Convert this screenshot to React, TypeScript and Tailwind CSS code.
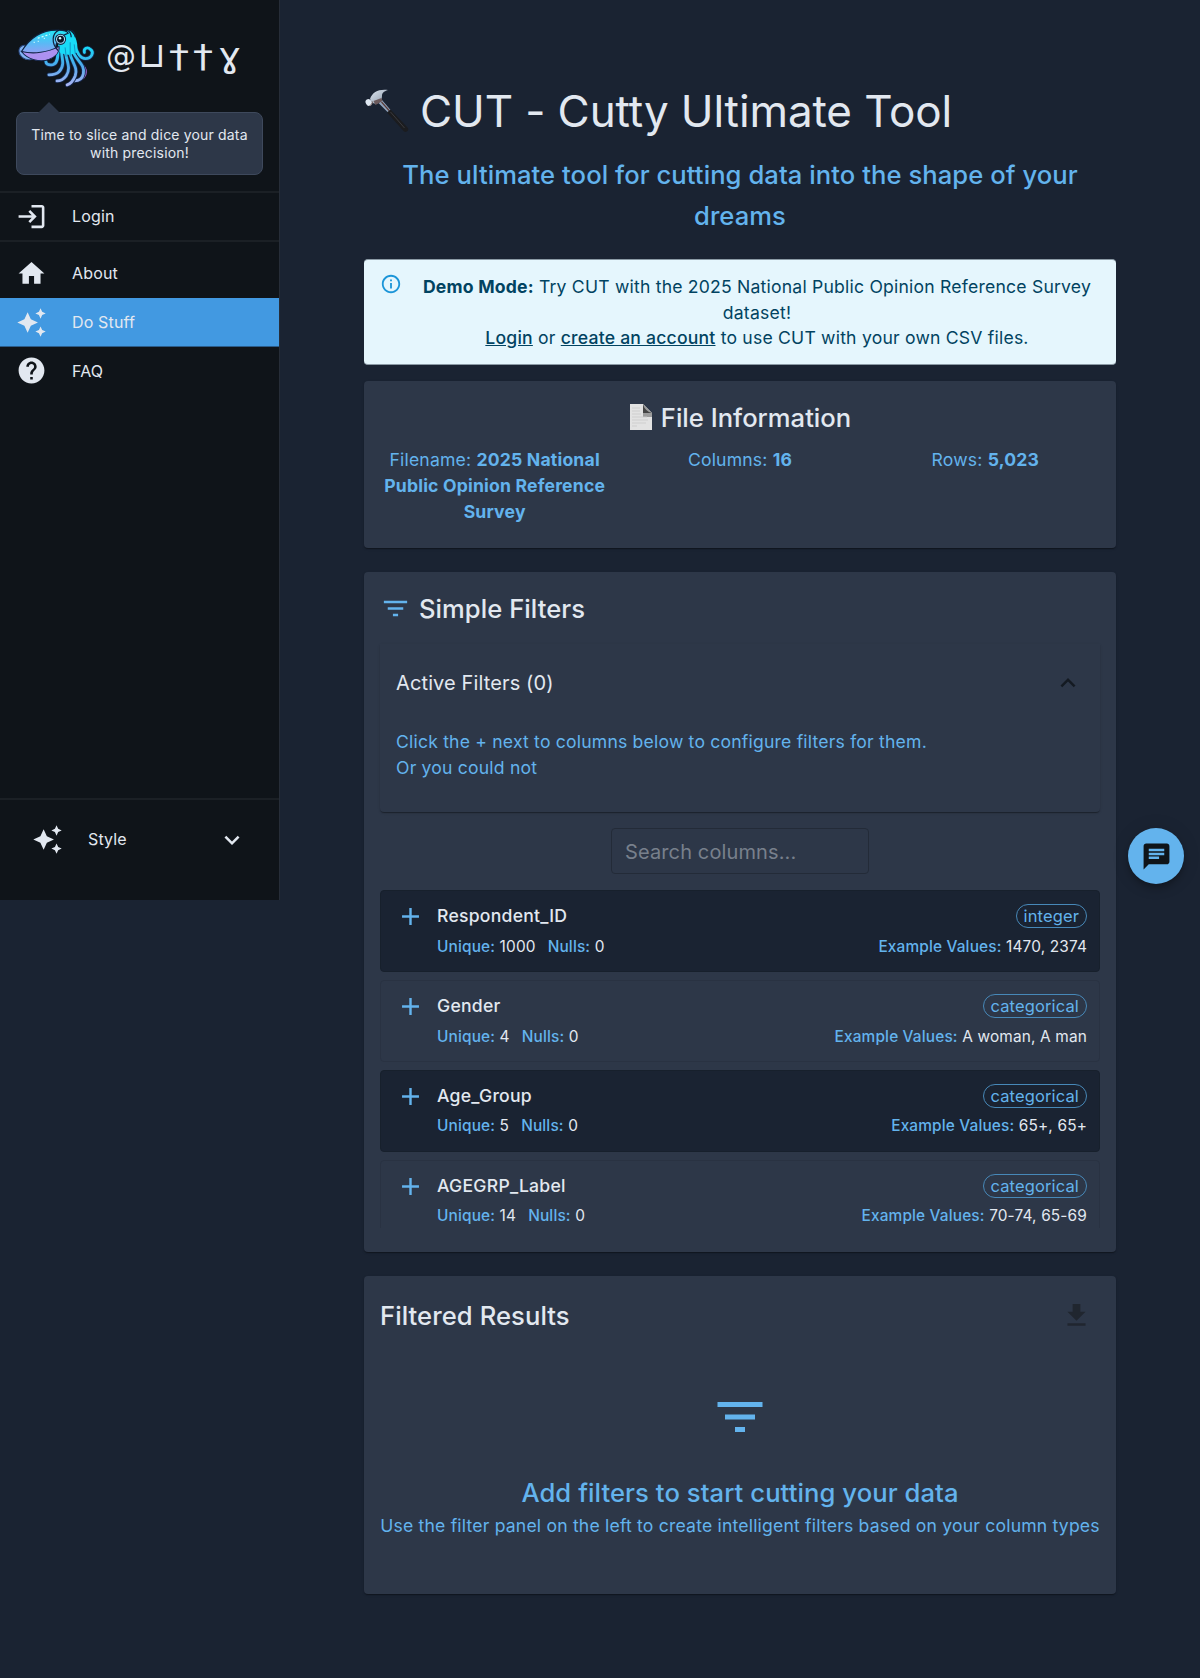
import React from "react";

const P = {
  login: "M11 7 9.6 8.4l2.6 2.6H2v2h10.2l-2.6 2.6L11 17l5-5zm9 12h-8v2h8c1.1 0 2-.9 2-2V5c0-1.100-.9-2-2-2h-8v2h8z",
  home: "M10 20v-6h4v6h5v-8h3L12 3 2 12h3v8z",
  sparkle: "m19 9 1.250-2.750L23 5l-2.750-1.250L19 1l-1.250 2.750L15 5l2.750 1.250zm-7.500.5L9 4 6.500 9.500 1 12l5.500 2.500L9 20l2.500-5.500L17 12zM19 15l-1.250 2.750L15 19l2.750 1.250L19 23l1.250-2.750L23 19l-2.750-1.250z",
  help: "M12 2C6.480 2 2 6.480 2 12s4.480 10 10 10 10-4.480 10-10S17.520 2 12 2m1 17h-2v-2h2zm2.070-7.750-.9.920C13.450 12.900 13 13.500 13 15h-2v-.5c0-1.100.450-2.100 1.170-2.830l1.240-1.260c.370-.360.590-.860.590-1.410 0-1.100-.9-2-2-2s-2 .9-2 2H8c0-2.210 1.790-4 4-4s4 1.790 4 4c0 .880-.360 1.680-.930 2.250",
  down: "M16.590 8.590 12 13.170 7.410 8.590 6 10l6 6 6-6z",
  up: "m12 8-6 6 1.410 1.410L12 10.830l4.590 4.580L18 14z",
  filter: "M10 18h4v-2h-4zM3 6v2h18V6zm3 7h12v-2H6z",
  plus: "M19 13h-6v6h-2v-6H5v-2h6V5h2v6h6z",
  chat: "M20 2H4c-1.100 0-1.990.9-1.990 2L2 22l4-4h14c1.100 0 2-.9 2-2V4c0-1.100-.9-2-2-2M6 9h12v2H6zm8 5H6v-2h8zm4-6H6V6h12z",
  download: "M5 20h14v-2H5zM19 9h-4V3H9v6H5l7 7z",
  info: "M11 7h2v2h-2zm0 4h2v6h-2zm1-9C6.480 2 2 6.480 2 12s4.480 10 10 10 10-4.480 10-10S17.520 2 12 2m0 18c-4.410 0-8-3.590-8-8s3.590-8 8-8 8 3.590 8 8-3.590 8-8 8",
};

function Icon({ d, className }: { d: string; className: string }) {
  return (
    <svg viewBox="0 0 24 24" fill="currentColor" className={"shrink-0 " + className}>
      <path d={d} />
    </svg>
  );
}

function Cuttlefish() {
  const arms = [
    "M57 29C60 36 62 40 67 40C73 40 76 34 72 31C69 28 65 30 66 34",
    "M54 31C57 42 67 45 65 55C64 60 60 62 56 62",
    "M51 32C53 44 60 48 57 57C55 62 53 65 49 66",
    "M47 33C49 44 53 50 48 57C45 61 43 62 39 62",
    "M43 32C45 43 46 48 41 53C38 56 34 56 31 56",
    "M40 31C40 40 39 45 35 46C30 47 28 45 28 43",
  ];
  return (
    <svg viewBox="0 0 78 70" className="h-[71px] w-[80px] shrink-0">
      <defs>
        <linearGradient id="mantle" x1="0" y1="0" x2="0" y2="1">
          <stop offset="0" stopColor="#22e4f4" />
          <stop offset="0.55" stopColor="#5bb9f5" />
          <stop offset="1" stopColor="#9a9cf4" />
        </linearGradient>
        <linearGradient id="arm" x1="0" y1="28" x2="0" y2="66" gradientUnits="userSpaceOnUse">
          <stop offset="0" stopColor="#14dcf8" />
          <stop offset="0.5" stopColor="#4da8ea" />
          <stop offset="1" stopColor="#a9b5f5" />
        </linearGradient>
      </defs>
      <path d="M9 27C1 26-1 34 5 39C10 43 15 41 18 40Z" fill="#83b4f4" stroke="#2b4a80" />
      <g fill="none" strokeLinecap="round">
        <path d="M62 45C69 49 70 58 60 62" stroke="#9a62cf" strokeWidth="2.200" />
        {arms.map((d) => (
          <g key={d}>
            <path d={d} stroke="#14284c" strokeWidth="4.400" />
            <path d={d} stroke="url(#arm)" strokeWidth="2.800" />
          </g>
        ))}
      </g>
      <path d="M40 30C40 22 42 15 50 12C56 14 60 22 59 33C55 37 47 37 42 34Z" fill="#18dbf7" />
      <path d="M52 24v14M47 29l1 9M56 26l1 9" stroke="#1283b8" strokeWidth=".8" fill="none" />
      <path d="M4 33C12 20 24 11 41 12C46 12 49 13 50 15C43 17 37 24 38 30C28 37 13 38 4 33Z" fill="url(#mantle)" stroke="#10233f" strokeWidth="1.200" />
      <path d="M4 33C16 36 30 34 41 28C42 33 38 38 31 41C22 44 10 41 4 33Z" fill="#ad91f0" stroke="#14284c" strokeWidth="1" />
      <path d="M41 12C34 15 33 25 40 32M49 12C53 14 53 17 53 19M52 12C56 13 57 16 57 19" fill="none" stroke="#10233f" strokeWidth="1.200" />
      <path d="M20 20l12-4M16 24h1M20 23h1M26 20h1" fill="none" stroke="#d8ffff" strokeWidth="1.200" strokeDasharray="2 2" />
      <circle cx="42.500" cy="21" r="5" fill="#a9dcf5" stroke="#10233f" />
      <circle cx="42.500" cy="21" r="3.400" fill="#0c1626" />
      <circle cx="42" cy="20" r="1.200" fill="#dff" />
    </svg>
  );
}

function Hammer() {
  return (
    <svg viewBox="0 0 44 44" className="-mt-[2px] h-[44px] w-[45px] shrink-0">
      <defs>
        <linearGradient id="steel" x1="0" y1="0" x2="1" y2="1">
          <stop offset="0" stopColor="#dde6f0" />
          <stop offset="0.6" stopColor="#a9b4c2" />
          <stop offset="1" stopColor="#5f6873" />
        </linearGradient>
      </defs>
      <path d="M14 14l3.500-3 9 10.500-2.500 2.500z" fill="#8fa3bd" />
      <path d="M17 13l8 9" stroke="#5b3d38" strokeWidth="1.200" />
      <path d="M22.500 23.500L26 20.500L43 38.500C45 41 42 44 39.500 42.500Z" fill="#1b1c1f" />
      <path d="M26 23L40 39" stroke="#3a3a3d" strokeWidth="1" />
      <path d="M5.500 10C8 3 14 0 23.500 1C19 2.500 17.500 4 17.500 7L17 12L12 15L8 14Z" fill="url(#steel)" />
      <path d="M9 12l8-3 1 3-7 4z" fill="#6b5a5c" />
      <ellipse cx="4.300" cy="13.500" rx="3" ry="3.600" transform="rotate(-35 4.300 13.500)" fill="#dfe8f2" />
      <path d="M5 16.500c2-.5 3-2 2.800-4" stroke="#6a5550" fill="none" />
    </svg>
  );
}

function PageIcon() {
  return (
    <svg viewBox="0 0 22 26" className="-mt-[2px] h-[26px] w-[22px] shrink-0">
      <path d="M0 0h13l9 9v17H0z" fill="#e2e2e2" />
      <path d="M13 0l9 9v4H13z" fill="#9c9c9c" />
      <path d="M13 0v9h9c-4-1-8-4-9-9z" fill="#444" />
      <path d="M2 4h8M2 7h8M2 10h9M2 13h15M2 16h16M2 19h14M2 22h5" stroke="#cacaca" strokeWidth=".8" />
    </svg>
  );
}

const card = "w-full rounded bg-[#2d3748] shadow-[0_2px_1px_-1px_rgba(0,0,0,.2),0_1px_1px_rgba(0,0,0,.14),0_1px_3px_rgba(0,0,0,.12)]";

const nav = [
  { label: "About", icon: P.home, row: "h-[48px]" },
  { label: "Do Stuff", icon: P.sparkle, row: "h-[49px] border-b border-[#2a5c8a] bg-[#4299e1]" },
  { label: "FAQ", icon: P.help, row: "h-[47px]" },
];

const columns = [
  { name: "Respondent_ID", unique: "1000", type: "integer", ex: "1470, 2374" },
  { name: "Gender", unique: "4", type: "categorical", ex: "A woman, A man" },
  { name: "Age_Group", unique: "5", type: "categorical", ex: "65+, 65+" },
  { name: "AGEGRP_Label", unique: "14", type: "categorical", ex: "70-74, 65-69" },
];

function Sidebar() {
  return (
    <aside className="flex h-[900px] w-[280px] shrink-0 flex-col border-r border-[#262d38] bg-[#0f1419] text-[#e2e8f0]">
      <div className="flex h-[112px] items-start pl-[17px] pt-[18px]">
        <Cuttlefish />
        <div className="ml-[9px] flex items-baseline pt-[15px] font-['DejaVu_Sans'] leading-[44px]">
          <span className="w-[32px] text-[30px]">@</span>
          <span className="w-[31px] text-[35px]">⊔</span>
          <span className="w-[24px] origin-left scale-x-125 text-[32px]">†</span>
          <span className="w-[25px] origin-left scale-x-125 text-[32px]">†</span>
          <span className="origin-left scale-x-115 text-[34px]">ɣ</span>
        </div>
      </div>
      <div className="relative mx-4 flex h-[63px] items-center justify-center rounded-lg border border-[#3e495c] bg-[#2d3748] text-center text-[14px] leading-[18px] tracking-[0.012em]">
        <span className="absolute -top-[11px] left-[21px] border-x-[11px] border-b-[11px] border-x-transparent border-b-[#2d3748]" />
        <p className="w-[230px]">Time to slice and dice your data with precision!</p>
      </div>
      <div className="mt-4 flex h-[51px] items-center border-y-2 border-[#1b2025] pb-px pl-4 text-[16px] tracking-[0.00938em]">
        <Icon d={P.login} className="size-[31px]" />
        <span className="ml-[25px]">Login</span>
      </div>
      <nav className="mt-[7px] text-[16px] tracking-[0.00938em]">
        {nav.map((n, i) => (
          <div key={n.label} className={n.row + (i === 0 ? " mb-px" : "") + " flex items-center pl-4"}>
            <Icon d={n.icon} className="size-[31px]" />
            <span className="ml-[25px]">{n.label}</span>
          </div>
        ))}
      </nav>
      <div className="mt-auto flex h-[102px] items-start border-t-2 border-[#1b2025] pl-8 pt-[24px] text-[16px] tracking-[0.00938em]">
        <Icon d={P.sparkle} className="size-[31px]" />
        <span className="ml-[25px] mt-[3px]">Style</span>
        <Icon d={P.down} className="ml-auto mr-[32px] mt-px size-[30px]" />
      </div>
    </aside>
  );
}

export default function App() {
  return (
    <div className="flex h-[1678px] w-[1200px] items-start overflow-hidden bg-[#1a2332] font-['Inter',sans-serif] text-[#e2e8f0]">
      <Sidebar />
      <main className="ml-[84px] flex w-[752px] flex-col pt-[84px]">
        <div className="flex h-[55px] items-center">
          <Hammer />
          <h1 className="ml-[11px] whitespace-nowrap text-[44px] leading-[55px] tracking-[-0.0025em]">CUT - Cutty Ultimate Tool</h1>
        </div>
        <h2 className="mt-[15px] h-[82px] text-center text-[25.600px] font-medium leading-[41px] tracking-[0.0025em] text-[#63b3ed]">
          The ultimate tool for cutting data into the shape of your dreams
        </h2>
        <div className="mt-[23px] flex h-[106px] rounded border-y border-[#8b9aa5] bg-[#e5f6fd] pl-[16px] pt-[13px] text-[#014361]">
          <Icon d={P.info} className="size-[22px] text-[#1c95d8]" />
          <p className="ml-[15px] mt-px w-[680px] text-center text-[17.600px] leading-[25.700px] tracking-[0.0115em]">
            <b>Demo Mode:</b> Try CUT with the 2025 National Public Opinion Reference Survey dataset!
            <br />
            <span className="font-medium underline">Login</span> or <span className="font-medium underline">create an account</span> to use CUT with your own CSV files.
          </p>
        </div>

        <section className={card + " mt-4 h-[167px] px-4 pt-[16px]"}>
          <div className="flex h-[42px] items-center justify-center gap-[9px] pl-px">
            <PageIcon />
            <h3 className="text-[25.600px] font-medium tracking-[0.0005em]">File Information</h3>
          </div>
          <div className="mt-[8px] grid grid-cols-3 gap-4 text-center text-[17.600px] leading-[26px] tracking-[0.0105em] text-[#63b3ed]">
            <p>Filename: <b>2025 National Public Opinion Reference Survey</b></p>
            <p>Columns: <b>16</b></p>
            <p>Rows: <b>5,023</b></p>
          </div>
        </section>

        <section className={card + " mt-6 h-[680px] px-4 pt-[16px]"}>
          <div className="flex h-[42px] items-center">
            <Icon d={P.filter} className="mb-px size-[31px] text-[#63b3ed]" />
            <h3 className="ml-[8px] text-[25.600px] font-medium tracking-[0.002em]">Simple Filters</h3>
          </div>
          <div className="mt-[14px] h-[168px] rounded-b bg-[#2d3748] px-4 pt-[24px] shadow-[0_2px_1px_-1px_rgba(0,0,0,.2),0_1px_1px_rgba(0,0,0,.14),0_1px_3px_rgba(0,0,0,.12)]">
            <div className="flex h-[30px] items-center justify-between text-[20px] tracking-[0.006em]">
              <span>Active Filters (0)</span>
              <Icon d={P.up} className="mr-px size-[30px] text-[#141a22]" />
            </div>
            <p className="mt-[31px] text-[17.600px] leading-[26px] tracking-[0.0108em] text-[#63b3ed]">
              Click the + next to columns below to configure filters for them.
              <br />
              Or you could not
            </p>
          </div>
          <div className="mx-auto mt-4 flex h-[46px] w-[258px] items-center rounded border border-[#232b38] pl-[13px] pt-[2px] text-[20px] tracking-[0.006em] text-[#78808c]">
            Search columns...
          </div>
          <div className="mt-4 flex h-[338px] flex-col gap-2 overflow-hidden">
            {columns.map((c, i) => (
              <div key={c.name} className={(i % 2 === 0 ? "bg-[#1a2332] border-[#17202c]" : "bg-[#2d3748] border-[#293242]") + " flex h-[82px] shrink-0 rounded border pl-[15px] pr-[12px] pt-[12px]"}>
                <Icon d={P.plus} className="-mt-px size-[29px] text-[#63b3ed]" />
                <div className="ml-[12px] flex grow flex-col">
                  <div className="flex h-[26px] items-center justify-between">
                    <span className="text-[17.600px] font-medium tracking-[0.014em]">{c.name}</span>
                    <span className="flex h-[24px] items-center rounded-full border border-[#4788b8] px-[7px] text-[16.500px] tracking-[0.008em] text-[#63b3ed]">{c.type}</span>
                  </div>
                  <div className={(i < 2 ? "mt-[7px]" : "mt-[6px]") + " flex h-[22px] items-center justify-between text-[15.400px] tracking-[0.0102em] text-[#e2e8f0]"}>
                    <span>
                      <span className="font-medium text-[#63b3ed]">Unique:</span> {c.unique}
                      <span className="ml-[12px] font-medium text-[#63b3ed]">Nulls:</span> 0
                    </span>
                    <span>
                      <span className="font-medium text-[#63b3ed]">Example Values:</span> {c.ex}
                    </span>
                  </div>
                </div>
              </div>
            ))}
          </div>
        </section>

        <section className={card + " mt-6 h-[318px] px-4 pt-[19px]"}>
          <div className="flex h-[42px] items-center justify-between">
            <h3 className="text-[25.600px] font-medium tracking-[0.003em]">Filtered Results</h3>
            <Icon d={P.download} className="mb-[2px] mr-[8px] size-[31px] text-[#20262f]" />
          </div>
          <div className="flex flex-col items-center pt-[50px] text-[#63b3ed]">
            <Icon d={P.filter} className="size-[60px]" />
            <h3 className="mt-[25px] text-[25.600px] font-medium leading-[41px] tracking-[0.003em]">Add filters to start cutting your data</h3>
            <p className="whitespace-nowrap text-[17.600px] leading-[26px] tracking-[0.0105em]">Use the filter panel on the left to create intelligent filters based on your column types</p>
          </div>
        </section>
      </main>
      <button className="fixed left-[1128px] top-[828px] flex size-[56px] items-center justify-center rounded-full bg-[#63b3ed] text-[#0f1419] shadow-[0_3px_5px_-1px_rgba(0,0,0,.2),0_6px_10px_rgba(0,0,0,.14),0_1px_18px_rgba(0,0,0,.12)]">
        <Icon d={P.chat} className="size-[31px]" />
      </button>
    </div>
  );
}
